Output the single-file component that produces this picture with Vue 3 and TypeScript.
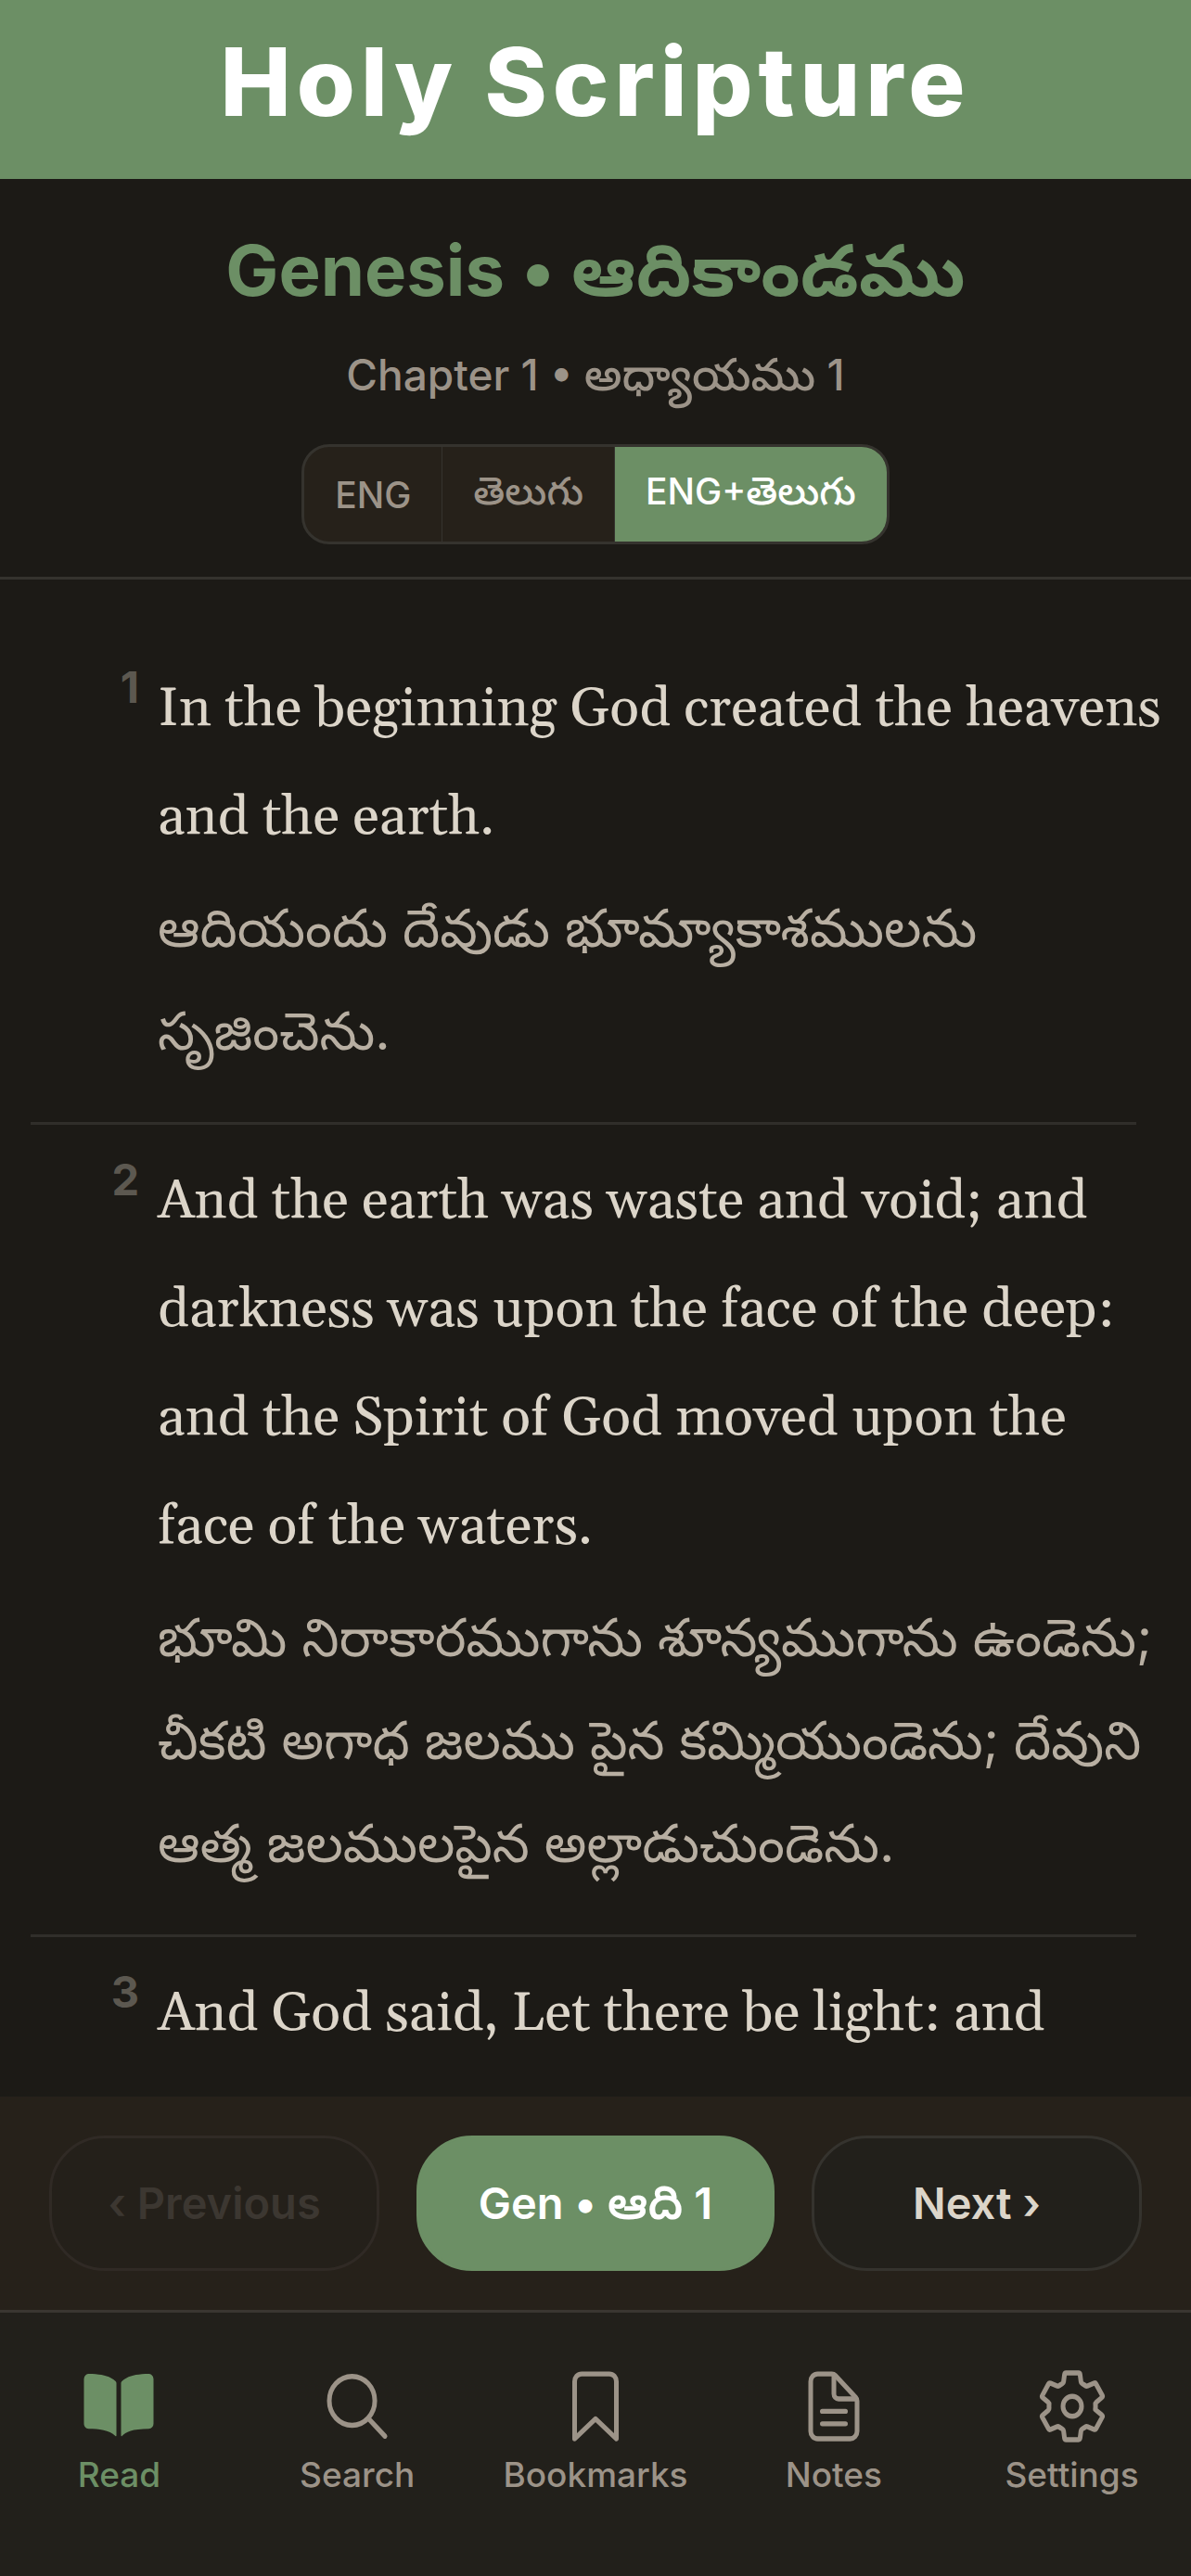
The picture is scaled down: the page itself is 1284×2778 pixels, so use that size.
<script setup lang="ts">
import { ref } from 'vue'

interface Language {
  id: string
  latin?: string
  telugu?: string
}

interface Verse {
  number: number
  english: string
  telugu?: string
}

interface Tab {
  id: string
  label: string
}

const languages: Language[] = [
  { id: 'en', latin: 'ENG' },
  { id: 'te', telugu: 'తెలుగు' },
  { id: 'both', latin: 'ENG+', telugu: 'తెలుగు' },
]
const language = ref('both')

const verses: Verse[] = [
  {
    number: 1,
    english: 'In the beginning God created the heavens and the earth.',
    telugu: 'ఆదియందు దేవుడు భూమ్యాకాశములను సృజించెను.',
  },
  {
    number: 2,
    english:
      'And the earth was waste and void; and darkness was upon the face of the deep: and the Spirit of God moved upon the face of the waters.',
    telugu:
      'భూమి నిరాకారముగాను శూన్యముగాను ఉండెను; చీకటి అగాధ జలము పైన కమ్మియుండెను; దేవుని ఆత్మ జలములపైన అల్లాడుచుండెను.',
  },
  { number: 3, english: 'And God said, Let there be light: and' },
]

const tabs: Tab[] = [
  { id: 'read', label: 'Read' },
  { id: 'search', label: 'Search' },
  { id: 'bookmarks', label: 'Bookmarks' },
  { id: 'notes', label: 'Notes' },
  { id: 'settings', label: 'Settings' },
]
const activeTab = ref('read')
</script>

<template>
  <div class="app">
    <header class="banner">
      <h1>Holy Scripture</h1>
    </header>

    <section class="heading">
      <h2>Genesis • <span lang="te">ఆదికాండము</span></h2>
      <p class="chapter">Chapter 1 • <span lang="te">అధ్యాయము</span> 1</p>
      <div class="languages" role="group" aria-label="Language">
        <button
          v-for="item in languages"
          :key="item.id"
          type="button"
          :class="{ selected: item.id === language }"
          :aria-pressed="item.id === language"
          @click="language = item.id"
        >{{ item.latin }}<span v-if="item.telugu" lang="te">{{ item.telugu }}</span></button>
      </div>
    </section>

    <main class="reader">
      <article v-for="verse in verses" :key="verse.number" class="verse">
        <span class="number">{{ verse.number }}</span>
        <div class="text">
          <p class="english">{{ verse.english }}</p>
          <p v-if="verse.telugu" class="telugu" lang="te">{{ verse.telugu }}</p>
        </div>
      </article>
    </main>

    <div class="pager">
      <button type="button" class="step" disabled>‹ Previous</button>
      <button type="button" class="current">Gen • <span lang="te">ఆది</span> 1</button>
      <button type="button" class="step">Next ›</button>
    </div>

    <nav class="tabs">
      <a
        v-for="tab in tabs"
        :key="tab.id"
        :href="'#' + tab.id"
        :class="{ active: tab.id === activeTab }"
        @click="activeTab = tab.id"
      >
        <svg viewBox="0 0 512 512" preserveAspectRatio="none" aria-hidden="true">
          <path
            v-if="tab.id === 'read'"
            class="solid"
            d="M202.24 74C166.11 56.75 115.61 48.3 48 48a31.36 31.36 0 00-17.92 5.33A32 32 0 0016 79.9V366c0 19.34 13.76 33.93 32 33.93 71.07 0 142.36 6.64 185.06 47a4.11 4.11 0 006.94-3V106.82a15.89 15.89 0 00-5.46-12A143 143 0 00202.24 74zM481.92 53.3A31.33 31.33 0 00464 48c-67.61.3-118.11 8.71-154.24 26a143.31 143.31 0 00-32.31 20.78 15.93 15.93 0 00-5.45 12v337.13a3.93 3.93 0 006.68 2.81c25.67-25.5 70.72-46.82 185.36-46.81a32 32 0 0032-32v-288a32 32 0 00-14.08-26.61z"
          />
          <template v-else-if="tab.id === 'search'">
            <circle cx="221" cy="221" r="157" />
            <path d="M338.3 338.3L448 448" />
          </template>
          <path
            v-else-if="tab.id === 'bookmarks'"
            d="M352 48H160a48 48 0 00-48 48v368l144-128 144 128V96a48 48 0 00-48-48z"
          />
          <template v-else-if="tab.id === 'notes'">
            <path
              d="M416 221.25V416a48 48 0 01-48 48H144a48 48 0 01-48-48V96a48 48 0 0148-48h98.75a32 32 0 0122.62 9.37l141.26 141.26a32 32 0 019.37 22.62z"
            />
            <path d="M256 56v120a32 32 0 0032 32h120M176 288h160M176 368h160" />
          </template>
          <template v-else>
            <circle cx="256" cy="256" r="64" />
            <path
              d="M416.4 256a154.3 154.3 0 01-1.5 20.8l45.2 35.5a10.8 10.8 0 012.4 13.7l-42.8 74a10.8 10.8 0 01-13.1 4.6l-44.9-18.1a16.1 16.1 0 00-15.2 1.8A164.5 164.5 0 01325 400.8a15.9 15.9 0 00-8.8 12.1l-6.7 47.9a11.1 11.1 0 01-10.7 9.2h-85.6a11.1 11.1 0 01-10.7-8.9l-6.7-47.8a16.1 16.1 0 00-9-12.2 155.3 155.3 0 01-21.5-12.6 16 16 0 00-15.1-1.7l-44.9 18.1a10.8 10.8 0 01-13.1-4.6l-42.8-74a10.8 10.8 0 012.5-13.8l38.2-30a16 16 0 006-14c-.4-4.2-.6-8.4-.6-12.5s.2-8.3.6-12.4a16 16 0 00-6.1-13.9l-38.2-30A10.8 10.8 0 0149.5 186l42.8-74a10.8 10.8 0 0113.1-4.6l44.9 18.1a16.1 16.1 0 0015.2-1.8A164.5 164.5 0 01187 111.2a15.9 15.9 0 008.8-12.1l6.7-47.9a11.1 11.1 0 0110.7-9.2h85.6a11.1 11.1 0 0110.7 8.9l6.7 47.8a16.1 16.1 0 009 12.2 155.3 155.3 0 0121.5 12.6 16 16 0 0015.1 1.7l44.9-18.1a10.8 10.8 0 0113.1 4.6l42.8 74a10.8 10.8 0 01-2.5 13.8l-38.2 30a16 16 0 00-6 14c.3 4.2.5 8.4.5 12.5z"
            />
          </template>
        </svg>
        <span>{{ tab.label }}</span>
      </a>
    </nav>
  </div>
</template>

<style>
body {
  margin: 0;
  background: #1c1a16;
}
</style>

<style scoped>
.app {
  display: flex;
  flex-direction: column;
  height: 100vh;
  background: #1c1a16;
  color: #dcd5c9;
  font-family: Inter, 'Noto Sans Telugu', sans-serif;
}

h1,
h2,
p {
  margin: 0;
}

button {
  margin: 0;
  font-family: inherit;
}

.banner {
  padding: 28px 0 45px;
  background: #6c8f65;
  color: #fff;
  text-align: center;
}

h1 {
  font-size: 102px;
  font-weight: 800;
  line-height: 120px;
  letter-spacing: 6px;
}

.heading {
  display: flex;
  flex-direction: column;
  align-items: center;
  padding: 46px 0 35px;
  border-bottom: 3px solid #35332e;
}

h2 {
  color: #6c8f65;
  font-size: 76px;
  font-weight: 700;
  line-height: 104px;
}

h2 span {
  font-size: 78px;
}

.chapter {
  margin: 26px 0 40px;
  color: #9c9388;
  font-size: 46px;
  font-weight: 500;
  line-height: 70px;
}

.chapter span {
  font-size: 49px;
}

.languages {
  display: flex;
  height: 102px;
  overflow: hidden;
  border: 3px solid #35332e;
  border-radius: 30px;
  background: #26211a;
}

.languages button {
  padding: 0 33px;
  border: 0;
  background: none;
  color: #9c9388;
  font-size: 39px;
  font-weight: 500;
}

.languages span {
  font-size: 42px;
}

.languages button + button {
  border-left: 1px solid #35332e;
}

.languages .selected {
  background: #6c8f65;
  color: #fff;
}

.reader {
  flex: 1;
  min-height: 0;
  overflow: hidden;
  padding: 57px 0 0 33px;
}

.verse {
  display: flex;
  gap: 20px;
  padding: 24px 0 0;
}

.verse + .verse {
  position: relative;
}

.verse + .verse::before {
  content: '';
  position: absolute;
  top: -3px;
  left: 0;
  right: 59px;
  height: 3px;
  background: #302e2a;
}

.number {
  flex: none;
  width: 117px;
  padding-top: 6px;
  color: #5c5850;
  font-size: 47px;
  font-weight: 700;
  line-height: 58px;
  text-align: right;
}

.text {
  flex: 1;
  padding: 0 30px 46px 0;
}

.english {
  font-family: Gelasio, Georgia, 'Liberation Serif', serif;
  font-size: 59px;
  line-height: 117px;
}

.telugu {
  margin-top: 5px;
  color: #b8afa2;
  font-size: 57px;
  line-height: 111px;
}

.pager {
  display: grid;
  grid-template-columns: 12fr 13fr 12fr;
  gap: 40px;
  padding: 42px 53px;
  background: #26211a;
}

.pager button {
  height: 146px;
  padding: 0;
  border: 3px solid #35332e;
  border-radius: 60px;
  background: #22201b;
  color: #dcd5c9;
  font-size: 47px;
  font-weight: 600;
  line-height: 60px;
}

.pager .step:disabled {
  border-color: #302a25;
  background: #24201a;
  color: #3c3731;
}

.pager .current {
  border-color: #6c8f65;
  background: #6c8f65;
  color: #fff;
}

.pager span {
  font-size: 51px;
  line-height: 50px;
}

.tabs {
  display: grid;
  grid-template-columns: repeat(5, 1fr);
  padding: 58px 0 84px;
  border-top: 3px solid #3a3631;
  background: #22201b;
}

.tabs a {
  display: flex;
  flex-direction: column;
  align-items: center;
  color: #9c9388;
  font-size: 37px;
  font-weight: 500;
  line-height: 50px;
  text-decoration: none;
}

.tabs .active {
  color: #6c8f65;
}

svg {
  width: 80px;
  height: 86px;
  margin-bottom: 6px;
  fill: none;
  stroke: currentColor;
  stroke-width: 32;
  stroke-linecap: round;
  stroke-linejoin: round;
}

.solid {
  fill: currentColor;
  stroke: none;
}
</style>
